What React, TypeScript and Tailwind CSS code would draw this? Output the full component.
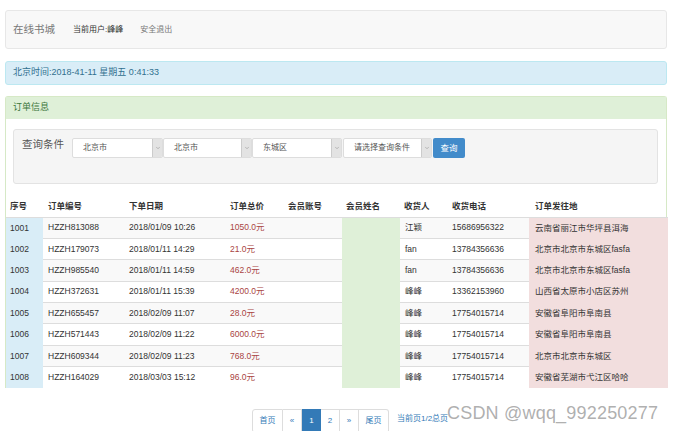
import { ChevronDown } from 'lucide-react'

interface Order {
  id: number
  no: string
  date: string
  total: string
  receiver: string
  phone: string
  address: string
}

const orders: Order[] = [
  { id: 1001, no: 'HZZH813088', date: '2018/01/09 10:26', total: '1050.0元', receiver: '江颖', phone: '15686956322', address: '云南省丽江市华坪县洱海' },
  { id: 1002, no: 'HZZH179073', date: '2018/01/11 14:29', total: '21.0元', receiver: 'fan', phone: '13784356636', address: '北京市北京市东城区fasfa' },
  { id: 1003, no: 'HZZH985540', date: '2018/01/11 14:59', total: '462.0元', receiver: 'fan', phone: '13784356636', address: '北京市北京市东城区fasfa' },
  { id: 1004, no: 'HZZH372631', date: '2018/01/11 15:39', total: '4200.0元', receiver: '峰峰', phone: '13362153960', address: '山西省太原市小店区苏州' },
  { id: 1005, no: 'HZZH655457', date: '2018/02/09 11:07', total: '28.0元', receiver: '峰峰', phone: '17754015714', address: '安徽省阜阳市阜南县' },
  { id: 1006, no: 'HZZH571443', date: '2018/02/09 11:22', total: '6000.0元', receiver: '峰峰', phone: '17754015714', address: '安徽省阜阳市阜南县' },
  { id: 1007, no: 'HZZH609344', date: '2018/02/09 11:23', total: '768.0元', receiver: '峰峰', phone: '17754015714', address: '北京市北京市东城区' },
  { id: 1008, no: 'HZZH164029', date: '2018/03/03 15:12', total: '96.0元', receiver: '峰峰', phone: '17754015714', address: '安徽省芜湖市弋江区哈哈' },
]

function FakeSelect({ label, width }: { label: string; width: string }) {
  return (
    <div className={`flex h-[20px] ${width} border border-[#ddd] rounded-[2px] bg-white overflow-hidden`}>
      <span className="flex-1 pl-[10px] leading-[18px] text-[8px] text-[#555]">{label}</span>
      <span className="w-[10px] bg-[#e3e3e3] border-l border-[#ccc] flex items-center justify-center text-[#888]">
        <ChevronDown size={6} strokeWidth={2} />
      </span>
    </div>
  )
}

export default function App() {
  return (
    <div className="relative w-[675px] h-[431px] overflow-hidden bg-white pt-[10px] pl-[5px] pr-[8px] font-['Liberation_Sans','Noto_Sans_CJK_SC',sans-serif] text-[#333]">
      <nav className="h-[39px] bg-[#f8f8f8] border border-[#e7e7e7] rounded-[3px] flex items-center pl-[7px]">
        <span className="text-[10.5px] text-[#777]">在线书城</span>
        <span className="ml-[18px] text-[8px] text-[#333]">当前用户:峰峰</span>
        <span className="ml-[17px] text-[8px] text-[#777]">安全退出</span>
      </nav>

      <div className="mt-[12px] h-[24px] bg-[#d9edf7] border border-[#bce8f1] rounded-[3px] flex items-center pl-[7px] text-[9px] text-[#31708f]">
        北京时间:2018-41-11 星期五 0:41:33
      </div>

      <div className="mt-[11px] border border-[#d6e9c6] rounded-t-[3px] border-b-0">
        <div className="h-[22px] bg-[#dff0d8] flex items-center pl-[7px] text-[9px] text-[#3c763d]">订单信息</div>
        <div className="pt-[10px] pl-[7px] pr-[8px]">
          <div className="h-[55px] bg-[#f5f5f5] border border-[#e3e3e3] rounded-[3px] flex items-start pt-[8px] pl-[8px]">
            <span className="text-[10.5px] text-[#555] leading-[14px] mt-[-1px]">查询条件</span>
            <div className="ml-[8px] flex">
              <FakeSelect label="北京市" width="w-[91px]" />
              <FakeSelect label="北京市" width="w-[89px]" />
              <FakeSelect label="东城区" width="w-[90px]" />
              <div className="ml-[1px]">
                <FakeSelect label="请选择查询条件" width="w-[89px]" />
              </div>
              <button className="ml-[1px] h-[20px] w-[32px] bg-[#428bca] rounded-[2px] text-white text-[8.5px]">查询</button>
            </div>
          </div>
        </div>

        <table className="mt-[12px] w-full table-fixed border-collapse text-[8.5px]">
          <thead>
            <tr className="h-[21px] border-b border-[#ddd] font-bold">
              <th className="w-[37px] pl-[4px] text-left">序号</th>
              <th className="w-[81px] pl-[5px] text-left">订单编号</th>
              <th className="w-[101px] pl-[5px] text-left">下单日期</th>
              <th className="w-[58px] pl-[5px] text-left">订单总价</th>
              <th className="w-[59px] pl-[5px] text-left">会员账号</th>
              <th className="w-[58px] pl-[4px] text-left">会员姓名</th>
              <th className="w-[47px] pl-[4px] text-left">收货人</th>
              <th className="w-[82px] pl-[5px] text-left">收货电话</th>
              <th className="w-[139px] pl-[6px] text-left">订单发往地</th>
            </tr>
          </thead>
          <tbody>
            {orders.map((o, i) => {
              const stripe = i % 2 === 0 ? 'bg-[#f9f9f9]' : 'bg-white'
              const cell = `${stripe} border-t border-[#ddd] pl-[5px]`
              return (
                <tr key={o.id} className="h-[21.4px]">
                  <td className="bg-[#d9edf7] pl-[4px]">{o.id}</td>
                  <td className={cell}>{o.no}</td>
                  <td className={cell}>{o.date}</td>
                  <td className={`${cell} text-[#a94442]`}>{o.total}</td>
                  <td className={cell}></td>
                  <td className="bg-[#dff0d8]"></td>
                  <td className={`${cell} pl-[4px]`}>{o.receiver}</td>
                  <td className={cell}>{o.phone}</td>
                  <td className="bg-[#f2dede] pl-[6px] whitespace-nowrap">{o.address}</td>
                </tr>
              )
            })}
          </tbody>
        </table>
      </div>

      <div className="mt-[21px] ml-[247px] flex items-start text-[8px]">
        <div className="flex h-[24px]">
          <span className="w-[31px] border border-[#ddd] rounded-l-[3px] flex items-center justify-center text-[#337ab7]">首页</span>
          <span className="w-[19px] border border-l-0 border-[#ddd] flex items-center justify-center text-[#337ab7]">«</span>
          <span className="w-[19px] bg-[#337ab7] border border-[#337ab7] flex items-center justify-center text-white">1</span>
          <span className="w-[19px] border border-l-0 border-[#ddd] flex items-center justify-center text-[#337ab7]">2</span>
          <span className="w-[19px] border border-l-0 border-[#ddd] flex items-center justify-center text-[#337ab7]">»</span>
          <span className="w-[30px] border border-l-0 border-[#ddd] rounded-r-[3px] flex items-center justify-center text-[#337ab7]">尾页</span>
        </div>
        <span className="ml-[8px] mt-[4px] text-[#337ab7]">当前页1/2总页</span>
      </div>

      <div className="absolute left-[447px] top-[400px] text-[18px] text-[#9a9a9a]/80 font-['Liberation_Sans',sans-serif] tracking-[0.2px]">
        CSDN @wqq_992250277
      </div>
    </div>
  )
}
